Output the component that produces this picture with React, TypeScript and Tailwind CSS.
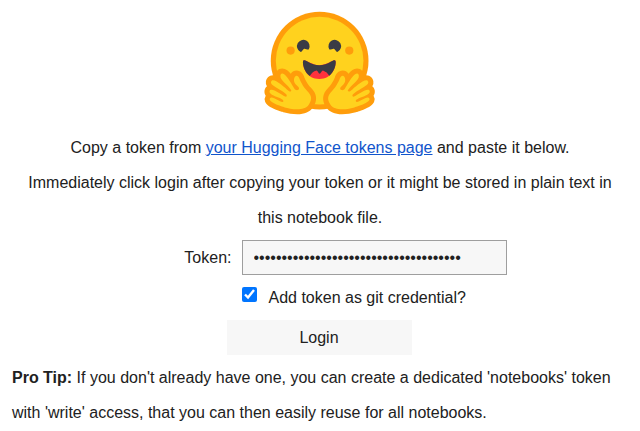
import { useState } from "react";

const OUTLINE =
  "M17.52 48c-1.62 0-3.06.66-4.07 1.87a5.97 5.97 0 0 0-1.33 3.76 7.1 7.1 0 0 0-1.94-.3c-1.55 0-2.95.59-3.94 1.66a5.8 5.8 0 0 0-.8 7 5.3 5.3 0 0 0-1.79 2.82c-.24.9-.48 2.8.8 4.74a5.22 5.22 0 0 0-.37 5.02c1.02 2.32 3.57 4.14 8.52 6.1 3.07 1.22 5.89 2 5.91 2.01a44.33 44.33 0 0 0 10.93 1.6c5.86 0 10.05-1.8 12.46-5.34 3.88-5.69 3.33-10.9-1.7-15.92-2.77-2.78-4.62-6.87-5-7.77-.78-2.66-2.84-5.62-6.25-5.62a5.7 5.7 0 0 0-4.6 2.46c-1-1.26-1.98-2.25-2.86-2.82A7.4 7.4 0 0 0 17.52 48Z";
const PALM =
  "M38.6 76.69c2.75-4.04 2.55-7.07-1.22-10.84-3.78-3.77-5.98-9.3-5.98-9.3s-.82-3.2-2.69-2.9c-1.87.3-3.24 5.08.68 8.01 3.91 2.93-.78 4.92-2.29 2.17-1.5-2.75-5.62-9.82-7.76-11.18-2.13-1.35-3.63-.6-3.13 2.2.5 2.79 9.43 9.55 8.56 11-.87 1.47-3.93-1.71-3.93-1.71s-9.57-8.71-11.66-6.44c-2.08 2.27 1.59 4.17 6.8 7.33 5.23 3.16 5.64 4 4.9 5.2-.75 1.2-12.28-8.53-13.36-4.4-1.08 4.11 11.77 5.3 10.98 8.15-.8 2.85-9.06-5.38-10.74-2.18-1.7 3.21 11.65 6.98 11.76 7.01 4.3 1.12 15.25 3.49 19.08-2.12Z";

function Hand() {
  return (
    <>
      <path fill="#FF9D0B" d={OUTLINE} />
      <path fill="#FFD21E" d={PALM} />
    </>
  );
}

function HuggingFaceLogo() {
  return (
    <svg viewBox="0 0 95 88" className="h-[111px] w-[120px]" role="img" aria-label="Hugging Face">
      <circle cx="47.21" cy="41.75" r="38.75" fill="#FF9D0B" />
      <circle cx="47.21" cy="41.75" r="34.75" fill="#FFD21E" />
      <path
        fill="#3A3B45"
        d="M58.5 32.3c1.28.44 1.78 3.06 3.07 2.38a5 5 0 1 0-6.76-2.07c.61 1.15 2.55-.72 3.7-.32ZM34.95 32.3c-1.28.44-1.79 3.06-3.07 2.38a5 5 0 1 1 6.76-2.07c-.61 1.15-2.56-.72-3.7-.32Z"
      />
      <path
        fill="#FF323D"
        d="M46.96 56.29c9.83 0 13-8.76 13-13.26 0-2.34-1.57-1.6-4.09-.36-2.33 1.15-5.46 2.74-8.9 2.74-7.19 0-13-6.88-13-2.38s3.16 13.26 13 13.26Z"
      />
      <path
        fill="#3A3B45"
        d="M39.43 54a8.7 8.7 0 0 1 5.3-4.49c.4-.12.81.57 1.24 1.28.4.68.82 1.37 1.24 1.37.45 0 .9-.68 1.33-1.35.45-.7.89-1.38 1.32-1.25a8.61 8.61 0 0 1 5 4.17c3.73-2.94 5.1-7.74 5.1-10.7 0-2.34-1.57-1.6-4.09-.36l-.14.07c-2.31 1.15-5.39 2.67-8.77 2.67s-6.45-1.52-8.77-2.67c-2.6-1.29-4.23-2.1-4.23.29 0 3.05 1.46 8.06 5.47 10.97Z"
      />
      <circle cx="70.71" cy="33.75" r="3.25" fill="#FF9D0B" />
      <circle cx="24.21" cy="33.75" r="3.25" fill="#FF9D0B" />
      <Hand />
      <g transform="translate(94.42 0) scale(-1 1)">
        <Hand />
      </g>
    </svg>
  );
}

export default function App() {
  const [token, setToken] = useState("hf_" + "a".repeat(34));
  const [gitCredential, setGitCredential] = useState(true);

  return (
    <main className="bg-white px-3 pt-2 font-['Liberation_Sans',Arial,sans-serif] text-base leading-[35px] text-[#212121]">
      <form className="flex flex-col gap-[5px]" onSubmit={(event) => event.preventDefault()}>
        <div className="flex flex-col items-center gap-[11px] text-center">
          <HuggingFaceLogo />
          <p className="px-2">
            Copy a token from{" "}
            <a href="https://huggingface.co/settings/tokens" className="text-[#1155cc] underline">
              your Hugging Face tokens page
            </a>{" "}
            and paste it below.
            <br />
            Immediately click login after copying your token or it might be stored in plain text in
            this notebook file.
          </p>
        </div>

        <div className="flex flex-col items-center gap-[5px] pr-0.5">
          <div className="flex w-[375px] items-center gap-[10px]">
            <label htmlFor="token" className="flex-1 text-right">
              Token:
            </label>
            <input
              id="token"
              type="password"
              value={token}
              onChange={(event) => setToken(event.target.value)}
              className="h-[35px] w-[265px] border border-[#9e9e9e] bg-[#f7f7f7] px-[11px] outline-none"
            />
          </div>

          <div className="flex w-[375px] items-center gap-3 pl-[110px]">
            <input
              id="git-credential"
              type="checkbox"
              checked={gitCredential}
              onChange={(event) => setGitCredential(event.target.checked)}
              className="mb-[6px] size-[15px] accent-[#0075ff]"
            />
            <label htmlFor="git-credential">Add token as git credential?</label>
          </div>

          <button type="submit" className="h-[35px] w-[185px] bg-[#f7f7f7]">
            Login
          </button>
        </div>

        <p>
          <b>Pro Tip:</b> If you don't already have one, you can create a dedicated 'notebooks'
          token with 'write' access, that you can then easily reuse for all notebooks.
        </p>
      </form>
    </main>
  );
}
